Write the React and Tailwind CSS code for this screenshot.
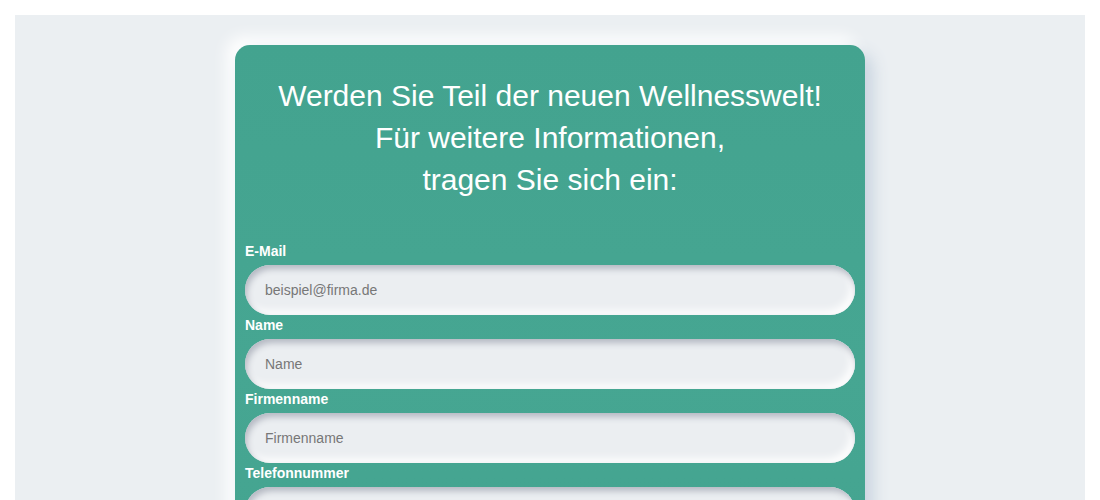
export default function App() {
  const fields = [
    { label: "E-Mail", placeholder: "beispiel@firma.de", type: "email" },
    { label: "Name", placeholder: "Name", type: "text" },
    { label: "Firmenname", placeholder: "Firmenname", type: "text" },
    { label: "Telefonnummer", placeholder: "Telefonnummer", type: "tel" },
  ];

  return (
    <div
      className="bg-white p-[15px]"
      style={{ fontFamily: '"Liberation Sans", Arial, sans-serif' }}
    >
      <div className="bg-[#ebeff2] pt-[30px] pb-[30px] flex justify-center">
        <div className="w-[630px] rounded-[15px] bg-gradient-to-b from-[#43a38f] via-[#46a692] to-[#43a38f] px-[10px] pt-[30px] pb-[30px] shadow-[8px_8px_16px_#c9d4e0,-8px_-8px_16px_#ffffff]">
          {/* HEADER */}
          <h1 className="text-center text-white text-[30px] leading-[42px] font-normal mb-[40px]">
            Werden Sie Teil der neuen Wellnesswelt!
            <br />
            Für weitere Informationen,
            <br />
            tragen Sie sich ein:
          </h1>

          {/* FORM */}
          <form>
            {fields.map((f) => (
              <div key={f.label}>
                <label className="block text-white text-[14px] font-bold leading-[20px] mb-[4px]">
                  {f.label}
                </label>
                <input
                  type={f.type}
                  placeholder={f.placeholder}
                  className="block w-full h-[50px] rounded-full bg-[#ebeef1] px-[20px] text-[14px] text-[#333] placeholder:text-[#777] outline-none shadow-[inset_2px_4px_6px_#b4b8c2,inset_-4px_-4px_8px_#ffffff]"
                />
              </div>
            ))}

            <div className="mt-[24px] flex items-start gap-[10px] text-white text-[13px] leading-[18px]">
              <input type="checkbox" className="mt-[2px] w-[16px] h-[16px]" />
              <span>
                Ich stimme zu, dass meine Angaben zur Kontaktaufnahme gespeichert
                und verarbeitet werden.
              </span>
            </div>

            <button
              type="button"
              className="mt-[30px] block w-full h-[50px] rounded-full bg-[#ebeef1] text-[#43a38f] text-[16px] font-bold shadow-[4px_4px_8px_#3a8c7a,-4px_-4px_8px_#52b8a2]"
            >
              Jetzt eintragen
            </button>
          </form>
        </div>
      </div>
    </div>
  );
}
